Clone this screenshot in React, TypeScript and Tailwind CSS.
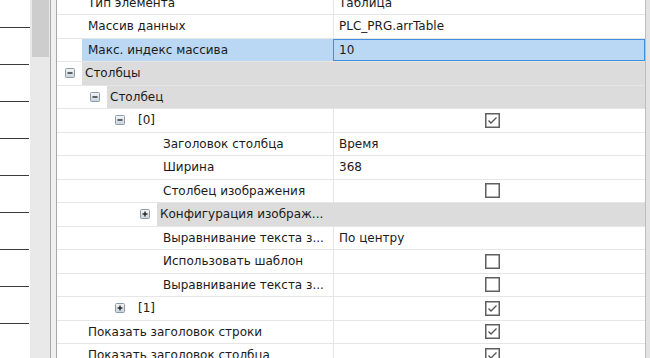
import React from 'react';

type Row = {
  label: string;
  level: number;
  value?: string;
  check?: boolean;
  group?: boolean;
  toggle?: 'minus' | 'plus';
  selected?: boolean;
};

const ROWS: Row[] = [
  { label: 'Тип элемента', level: 0, value: 'Таблица' },
  { label: 'Массив данных', level: 0, value: 'PLC_PRG.arrTable' },
  { label: 'Макс. индекс массива', level: 0, value: '10', selected: true },
  { label: 'Столбцы', level: 0, group: true, toggle: 'minus' },
  { label: 'Столбец', level: 1, group: true, toggle: 'minus' },
  { label: '[0]', level: 2, toggle: 'minus', check: true },
  { label: 'Заголовок столбца', level: 3, value: 'Время' },
  { label: 'Ширина', level: 3, value: '368' },
  { label: 'Столбец изображения', level: 3, check: false },
  { label: 'Конфигурация изображ...', level: 3, group: true, toggle: 'plus' },
  { label: 'Выравнивание текста з...', level: 3, value: 'По центру' },
  { label: 'Использовать шаблон', level: 3, check: false },
  { label: 'Выравнивание текста з...', level: 3, check: false },
  { label: '[1]', level: 2, toggle: 'plus', check: true },
  { label: 'Показать заголовок строки', level: 0, check: true },
  { label: 'Показать заголовок столбца', level: 0, check: true },
];

// width of the indent spacer per nesting level
const INDENT = ['w-0', 'w-[25px]', 'w-[50px]', 'w-[75px]'];

function Toggle({ kind }: { kind: 'minus' | 'plus' }) {
  return (
    <svg width="10" height="10" viewBox="0 0 10 10">
      <defs>
        <linearGradient id="tg" x1="0" y1="0" x2="0" y2="1">
          <stop offset="0" stopColor="#f4f6f8" />
          <stop offset="1" stopColor="#c9d3dc" />
        </linearGradient>
      </defs>
      <rect x="0.5" y="0.5" width="9" height="9" rx="1" fill="url(#tg)" stroke="#8d9ba7" />
      <line x1="2.5" y1="5" x2="7.5" y2="5" stroke="#1a1a1a" strokeWidth="1.3" />
      {kind === 'plus' && <line x1="5" y1="2.5" x2="5" y2="7.5" stroke="#1a1a1a" strokeWidth="1.3" />}
    </svg>
  );
}

function CheckBox({ checked }: { checked: boolean }) {
  return (
    <svg width="15" height="15" viewBox="0 0 15 15">
      <rect x="0.75" y="0.75" width="13.5" height="13.5" fill="#ffffff" stroke="#5f5f5f" strokeWidth="1.5" />
      {checked && <polyline points="3.5,7.5 6,10 11.5,4.5" fill="none" stroke="#555555" strokeWidth="1.4" />}
    </svg>
  );
}

function PropRow({ row }: { row: Row }) {
  return (
    <div className="flex h-[23.5px] shrink-0 border-b border-[#e6e6e6]">
      <div className={`${INDENT[row.level]} shrink-0`} />
      <div className="w-[25px] shrink-0 flex items-center justify-center">
        {row.toggle && <Toggle kind={row.toggle} />}
      </div>
      {row.group ? (
        <div className="flex-1 bg-[#dcdcdc] flex items-center pl-[3px] whitespace-nowrap">{row.label}</div>
      ) : (
        <>
          <div
            className={`flex-1 flex items-center pl-[6px] whitespace-nowrap overflow-hidden ${
              row.selected ? 'bg-[#bad8f3]' : ''
            }`}
          >
            {row.label}
          </div>
          <div
            className={`w-[312px] shrink-0 flex items-center border-l ${
              row.selected ? 'bg-[#bad8f3] border border-[#3f8fdc] pl-[5px]' : 'border-[#e6e6e6] pl-[5px]'
            } ${row.check !== undefined ? 'justify-center pl-[0px]' : ''}`}
          >
            {row.check !== undefined ? <CheckBox checked={row.check} /> : row.value}
          </div>
        </>
      )}
    </div>
  );
}

export default function App() {
  return (
    <div
      className="flex w-[650px] h-[358px] overflow-hidden bg-white text-[12px] text-[#1b1b1b]"
      style={{ fontFamily: '"DejaVu Sans", "Liberation Sans", sans-serif' }}
    >
      {/* canvas lines on the far left */}
      <div className="w-[30px] shrink-0 flex flex-col">
        <div className="h-[28px] shrink-0 border-b border-[#3a3a3a]" />
        {Array.from({ length: 8 }).map((_, i) => (
          <div key={i} className="h-[37px] shrink-0 border-b border-[#3a3a3a] mr-[1px]" />
        ))}
      </div>

      {/* scrollbar */}
      <div className="w-[20px] shrink-0 bg-[#e9e9e9] pl-[2px] pr-[1px]">
        <div className="h-[57px] bg-[#cdcdcd]" />
      </div>

      {/* splitter */}
      <div className="w-[7px] shrink-0 bg-[#f0f0f0] border-l border-r border-[#a9a9a9]" />

      {/* property grid */}
      <div className="flex-1 flex flex-col overflow-hidden mt-[-8.5px]">
        {ROWS.map((r, i) => (
          <PropRow key={i} row={r} />
        ))}
      </div>

      <div className="w-[5px] shrink-0 bg-[#e3e3e3] border-l border-[#bdbdbd]" />
    </div>
  );
}
